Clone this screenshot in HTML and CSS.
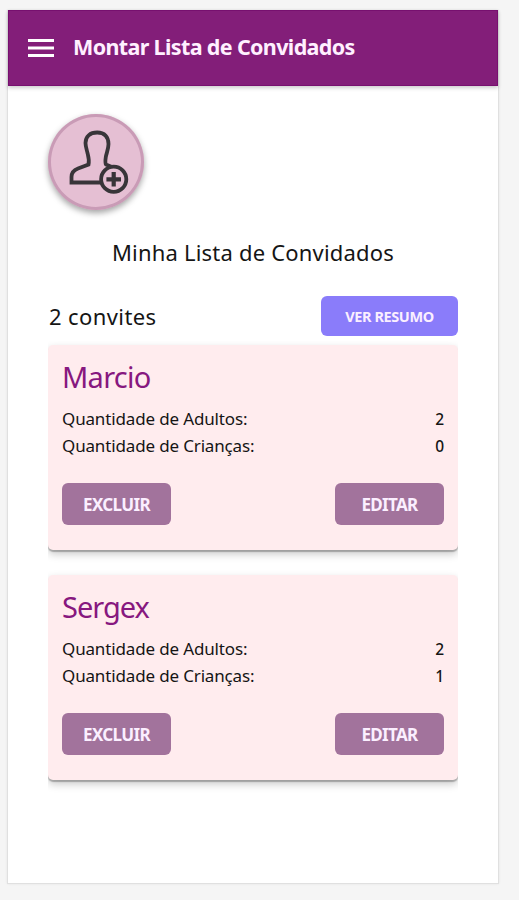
FILE: index.html
```html
<!DOCTYPE html>
<html lang="pt-BR">
<head>
<meta charset="utf-8">
<title>Montar Lista de Convidados</title>
<link rel="stylesheet" href="styles.css">
</head>
<body>
<div class="screen">
  <header class="toolbar">
    <svg class="menu" viewBox="0 0 26 18" width="26" height="18"><path d="M0 1.5h26M0 9h26M0 16.5h26" fill="none" stroke="#fff" stroke-width="2.8"/></svg>
    <h1>Montar Lista de Convidados</h1>
  </header>
  <main class="content">
    <button class="add" aria-label="Adicionar convidado">
      <svg viewBox="0 0 96 96" width="96" height="96" fill="none" stroke="#383539" stroke-width="3.8">
        <path d="M55 68.500H23.500V63C23.500 58 26 56 30 54.500L40.500 50.500C41.500 46 40.500 43 39.500 39C38.500 35 37.500 32 37.500 29C37.500 22.500 42 18.500 49.200 18.500C56.500 18.500 60.500 23 60.500 30C60.500 35 58.500 39 57.800 43C57.200 47 57 49 58 50.500L65 53.500"/>
        <circle cx="65.700" cy="65.300" r="12.600" fill="#e5bfd3"/>
        <path d="M65.700 58v14.600M58.400 65.300H73" stroke-width="4.200"/>
      </svg>
    </button>
    <h2>Minha Lista de Convidados</h2>
    <div class="summary"><p>2 convites</p><button class="resume">VER RESUMO</button></div>
    <section class="list">
      <article class="card">
        <h3>Marcio</h3>
        <div class="row"><span>Quantidade de Adultos:</span><b>2</b></div>
        <div class="row"><span>Quantidade de Crianças:</span><b>0</b></div>
        <div class="actions"><button>EXCLUIR</button><button>EDITAR</button></div>
      </article>
      <article class="card">
        <h3 class="long">Sergex</h3>
        <div class="row"><span>Quantidade de Adultos:</span><b>2</b></div>
        <div class="row"><span>Quantidade de Crianças:</span><b>1</b></div>
        <div class="actions"><button>EXCLUIR</button><button>EDITAR</button></div>
      </article>
    </section>
  </main>
</div>
</body>
</html>
```
FILE: styles.css
```css
* { box-sizing: border-box; }
body { margin: 0; height: 900px; padding: 10px 20px 16px 7px; background: #f5f5f5; font-family: "Noto Sans", "Open Sans", sans-serif; color: #151515; overflow: hidden; }
h1, h2, h3, p { margin: 0; font-weight: 400; white-space: nowrap; }
button { border: 0; padding: 0; font-family: inherit; color: #fbefff; white-space: nowrap; }
.screen { width: 492px; height: 874px; background: #fff; border: 1px solid #e0e0e0; border-top: 0; box-shadow: 0 0 2px #e4e4e4; }
.toolbar { height: 76px; display: flex; align-items: center; gap: 20px; padding-left: 19px; background: #831e79; border: 1px solid #77106f; box-shadow: 0 2px 4px rgba(0,0,0,.2); }
.menu { display: block; }
h1 { font-size: 21.5px; line-height: 30px; font-weight: 700; color: #fff0ff; padding-bottom: 2px; letter-spacing: -.64px; margin-left: -1px; }
.content { padding: 28px 40px 0; }
.add { display: block; width: 96px; height: 96px; border-radius: 50%; background: #e5bfd3; box-shadow: inset 0 0 0 3px #c99bb6, 0 3px 6px rgba(0,0,0,.36); }
.add svg { display: block; }
h2 { margin-top: 26px; height: 32px; line-height: 32px; text-align: center; font-size: 22px; letter-spacing: .2px; }
.summary { height: 40px; margin-top: 28px; display: flex; justify-content: space-between; align-items: center; }
.summary p { font-size: 22px; line-height: 32px; padding-left: 1px; letter-spacing: .4px; }
.resume { width: 137px; height: 40px; border-radius: 6px; background: #8a7cfa; font-size: 14.5px; font-weight: 700; letter-spacing: -.4px; }
.list { display: grid; gap: 25px; margin-top: 9px; clip-path: inset(-4px 0 -20px 0); }
.card { height: 205px; padding: 14px 14px 0; background: #ffecee; border-radius: 5px; box-shadow: 0 2px 1px rgba(0,0,0,.24), 0 4px 8px rgba(0,0,0,.22); }
h3 { font-size: 29px; line-height: 36px; height: 46px; color: #87187f; letter-spacing: -.7px; }
.long { letter-spacing: -1px; }
.row { display: flex; justify-content: space-between; height: 27px; line-height: 28px; font-size: 17px; letter-spacing: -.15px; white-space: nowrap; }
.row b { font-weight: 500; font-size: 15.5px; letter-spacing: 0; }
.actions { display: flex; justify-content: space-between; margin-top: 24px; }
.actions button { width: 109px; height: 42px; border-radius: 6px; background: #a2739c; font-size: 17px; font-weight: 700; letter-spacing: -.65px; }
```
